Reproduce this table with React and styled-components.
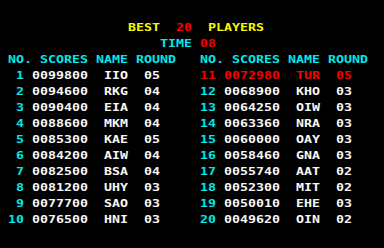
import React from "react";
import styled, { createGlobalStyle } from "styled-components";

const GlobalStyle = createGlobalStyle`
    html, body {
        margin: 0;
        padding: 0;
        background: #000;
    }
`;

const YELLOW = "#f8f800";
const RED = "#f80000";
const CYAN = "#00e8e8";
const WHITE = "#f8f8f8";

const left = [
    ["1", "0099800", "IIO", "05"],
    ["2", "0094600", "RKG", "04"],
    ["3", "0090400", "EIA", "04"],
    ["4", "0088600", "MKM", "04"],
    ["5", "0085300", "KAE", "05"],
    ["6", "0084200", "AIW", "04"],
    ["7", "0082500", "BSA", "04"],
    ["8", "0081200", "UHY", "03"],
    ["9", "0077700", "SAO", "03"],
    ["10", "0076500", "HNI", "03"],
];

const right = [
    ["11", "0072980", "TUR", "05"],
    ["12", "0068900", "KHO", "03"],
    ["13", "0064250", "OIW", "03"],
    ["14", "0063360", "NRA", "03"],
    ["15", "0060000", "OAY", "03"],
    ["16", "0058460", "GNA", "03"],
    ["17", "0055740", "AAT", "02"],
    ["18", "0052300", "MIT", "02"],
    ["19", "0050010", "EHE", "03"],
    ["20", "0049620", "OIN", "02"],
];

export default function App() {
    const renderPanel = (rows, current) => (
        <Panel>
            <Line>
                <Cell $col={1} $len={3} $color={CYAN}>NO.</Cell>
                <Cell $col={5} $len={6} $color={CYAN}>SCORES</Cell>
                <Cell $col={12} $len={4} $color={CYAN}>NAME</Cell>
                <Cell $col={17} $len={5} $color={CYAN}>ROUND</Cell>
            </Line>
            {rows.map(([no, score, name, round]) => {
                const hot = no === current;
                return (
                    <Line key={no}>
                        <Cell $col={0} $len={3} $color={hot ? RED : CYAN} $right>{no}</Cell>
                        <Cell $col={4} $len={7} $color={hot ? RED : WHITE}>{score}</Cell>
                        <Cell $col={13} $len={3} $color={hot ? RED : WHITE}>{name}</Cell>
                        <Cell $col={18} $len={2} $color={hot ? RED : WHITE}>{round}</Cell>
                    </Line>
                );
            })}
        </Panel>
    );

    return (
        <Screen>
            <GlobalStyle/>
            <Title>
                <Cell $col={16} $len={4} $color={YELLOW}>BEST</Cell>
                <Cell $col={22} $len={2} $color={RED}>20</Cell>
                <Cell $col={26} $len={7} $color={YELLOW}>PLAYERS</Cell>
            </Title>
            <Title>
                <Cell $col={20} $len={4} $color={CYAN}>TIME</Cell>
                <Cell $col={25} $len={2} $color={RED}>08</Cell>
            </Title>
            <Board>
                {renderPanel(left, null)}
                {renderPanel(right, "11")}
            </Board>
        </Screen>
    );
}

const Screen = styled.div`
    width: 384px;
    height: 248px;
    background: #000;
    padding-top: 24px;
    box-sizing: border-box;
    font-family: "DejaVu Sans Mono", "Liberation Mono", monospace;
    font-weight: bold;
    font-size: 10px;
    overflow: hidden;
`;

const Title = styled.div`
    display: grid;
    grid-template-columns: repeat(48, 8px);
    height: 16px;
`;

const Board = styled.div`
    display: grid;
    grid-template-columns: 192px 192px;
`;

const Panel = styled.div`
    display: flex;
    flex-direction: column;
`;

const Line = styled.div`
    display: grid;
    grid-template-columns: repeat(24, 8px);
    height: 16px;
`;

const Cell = styled.span`
    grid-column: ${p => p.$col + 1} / span ${p => p.$len};
    color: ${p => p.$color};
    text-align: ${p => (p.$right ? "right" : "left")};
    transform: scaleX(1.329);
    transform-origin: ${p => (p.$right ? "right" : "left")} top;
    line-height: 8px;
    height: 8px;
    white-space: pre;
`;
